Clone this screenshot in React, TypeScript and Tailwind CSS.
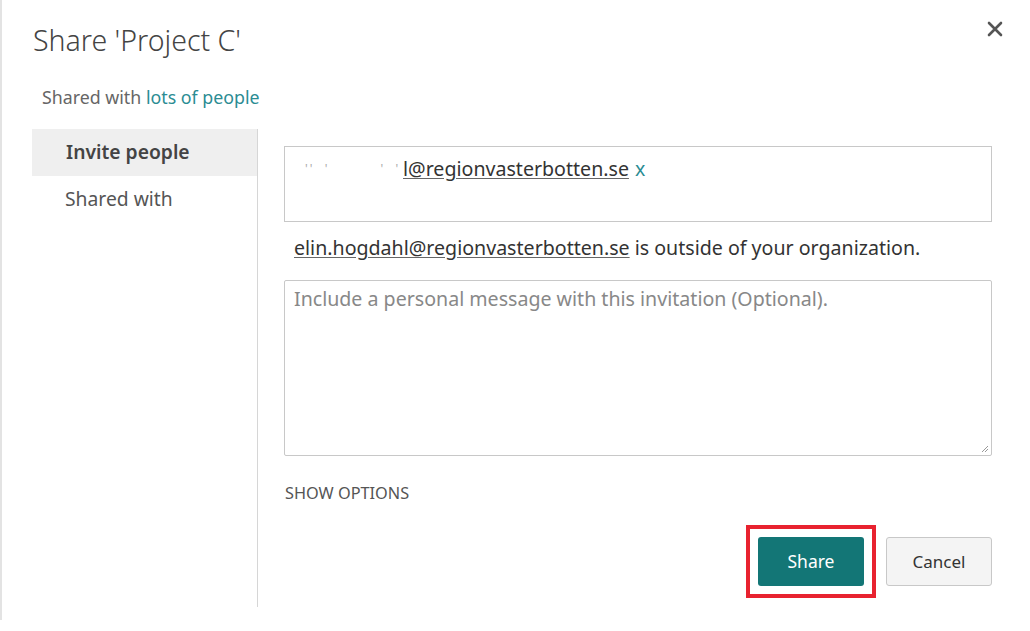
import React from "react";

export default function App() {
  const font = { fontFamily: '"Noto Sans", "Open Sans", Arial, sans-serif' };
  return (
    <div className="w-[1030px] h-[631px] bg-white relative overflow-hidden" style={font}>
      <div className="h-[620px] border-l-2 border-[#e3e3e3] flex flex-col relative">
        <button className="absolute left-[983px] top-[19px] w-[20px] h-[20px] flex items-center justify-center">
          <svg width="16" height="16" viewBox="0 0 16 16">
            <path d="M2 2 L14 14 M14 2 L2 14" stroke="#555" strokeWidth="2.6" strokeLinecap="round" />
          </svg>
        </button>
        <div className="mt-[22px] ml-[31px] text-[28.5px] leading-[36px] font-light text-[#444]">
          Share 'Project C'
        </div>
        <div className="mt-[27px] ml-[40px] text-[17.8px] leading-[24px] text-[#666]">
          Shared with <span className="text-[#2b8c93]">lots of people</span>
        </div>
        <div className="mt-[20px] flex">
          <div className="ml-[30px] w-[226px] h-[478px] border-r border-[#d6d6d6] flex flex-col">
            <div className="h-[47px] bg-[#efefef] pl-[34px] flex items-center text-[19.3px] font-semibold text-[#444]">
              Invite people
            </div>
            <div className="h-[46px] pl-[33px] flex items-center text-[19.3px] text-[#555]">
              Shared with
            </div>
          </div>
          <div className="pl-[26px] w-[734px] flex flex-col">
            <div className="mt-[17px] h-[76px] border border-[#c8c8c8] pt-[10px] pl-[20px] text-[19.6px] leading-[24px] text-[#333] flex">
              <span className="w-[98px] shrink-0 text-[#aaa] text-[12px] tracking-[2px] whitespace-pre">{"''  '          '  '"}</span>
              <span className="underline underline-offset-2 decoration-[#666]">l@regionvasterbotten.se</span>
              <span className="ml-[6px] text-[#2b8c93]">x</span>
            </div>
            <div className="mt-[14px] pl-[10px] text-[19.6px] leading-[24px] text-[#333]">
              <span className="underline underline-offset-2 decoration-[#666]">elin.hogdahl@regionvasterbotten.se</span> is outside of your organization.
            </div>
            <div className="mt-[20px] h-[176px] border border-[#c8c8c8] rounded-[2px] pt-[6px] pl-[9px] text-[19.6px] leading-[24px] text-[#888] relative">
              Include a personal message with this invitation (Optional).
              <svg className="absolute right-[2px] bottom-[2px]" width="10" height="10" viewBox="0 0 10 10">
                <path d="M9 3 L3 9 M9 6 L6 9" stroke="#999" strokeWidth="1" />
              </svg>
            </div>
            <div className="mt-[26px] pl-[1px] text-[16.3px] leading-[22px] text-[#555]">SHOW OPTIONS</div>
            <div className="mt-[33px] flex justify-end gap-[22px]">
              <div className="relative">
                <button className="w-[106px] h-[49px] rounded-[3px] bg-[#137676] text-white text-[17.5px]">Share</button>
                <div className="absolute -inset-[12px] border-4 border-[#e8222f] pointer-events-none" />
              </div>
              <button className="w-[106px] h-[49px] rounded-[3px] bg-[#f4f4f4] border border-[#c8c8c8] text-[#333] text-[17px]">Cancel</button>
            </div>
          </div>
        </div>
      </div>
    </div>
  );
}
